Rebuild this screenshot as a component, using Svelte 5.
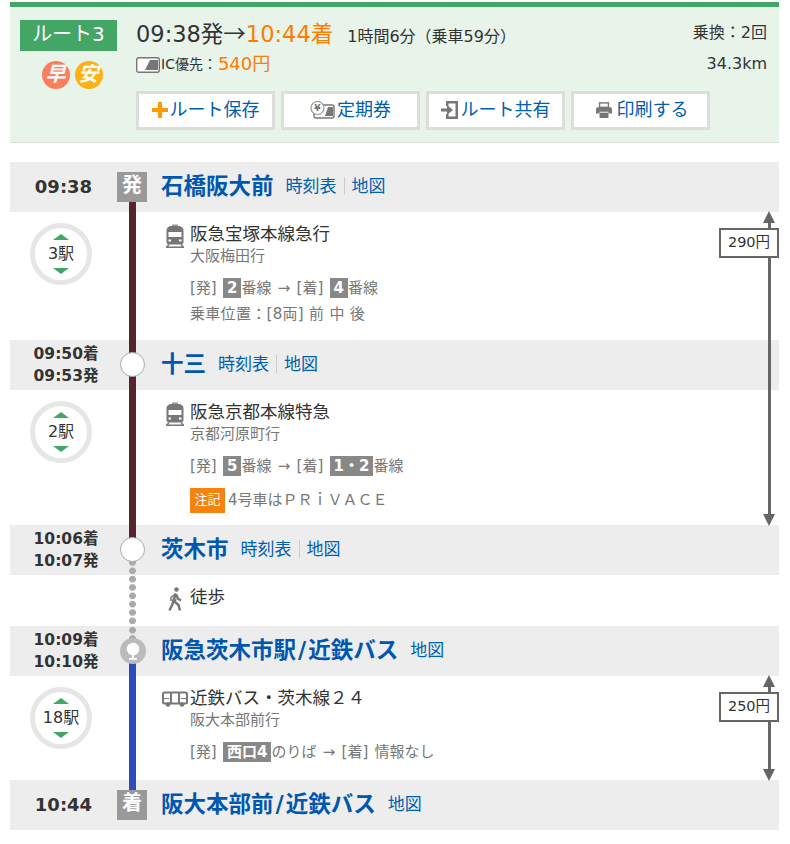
<script>
  const buttons = [
    { icon: "plus", label: "ルート保存" },
    { icon: "pass", label: "定期券" },
    { icon: "share", label: "ルート共有" },
    { icon: "print", label: "印刷する" },
  ];
</script>

{#snippet links(timetable = true)}
  <span class="links">
    {#if timetable}
      <a href="#top" class="timetable">時刻表</a>
    {/if}
    <a href="#top">地図</a>
  </span>
{/snippet}

{#snippet stops(label)}
  <div class="stops">
    <i class="tri up"></i>
    <span>{label}</span>
    <i class="tri down"></i>
  </div>
{/snippet}

{#snippet trainIcon()}
  <svg class="mode" viewBox="0 0 20 24" width="20" height="24">
    <path fill="#777" d="M7 2h6c3.500 0 5.500 2 5.500 4.500V18c0 1.500-1 2.500-2.500 2.500H4c-1.500 0-2.500-1-2.500-2.500V6.500C1.500 4 3.500 2 7 2z" />
    <rect x="7" y="0.500" width="6" height="1.500" fill="#999" />
    <rect x="3.500" y="8" width="13" height="5" fill="#fff" />
    <rect x="3.500" y="15.500" width="2.500" height="2" fill="#fff" />
    <rect x="14" y="15.500" width="2.500" height="2" fill="#fff" />
    <path fill="none" stroke="#777" stroke-width="1.500" d="M4 20.500l-2.500 2.800M16 20.500l2.500 2.800M1 23.200h18" />
  </svg>
{/snippet}

<div class="page" id="top">
  <section class="summary">
    <div class="badge-col">
      <div class="route-no">ルート3</div>
      <div class="marks">
        <span class="mark fast">早</span>
        <span class="mark cheap">安</span>
      </div>
    </div>
    <div class="summary-main">
      <div class="times">
        <span class="clock">09:38発<span class="arrow-glyph">→</span><em>10:44着</em></span>
        <span class="duration">1時間6分（乗車59分）</span>
      </div>
      <div class="price">
        <svg viewBox="0 0 24 16" width="24" height="16">
          <rect x="0.700" y="0.700" width="22.600" height="14.600" rx="2" fill="#fff" stroke="#777" stroke-width="1.400" />
          <path fill="#777" d="M9 13L14 3h8v10z" />
        </svg>
        <span class="ic">IC優先：</span>
        <em>540円</em>
      </div>
      <div class="actions">
        {#each buttons as b}
          <a href="#top" class="action">
            {#if b.icon === "plus"}
              <svg viewBox="0 0 16 16" width="16" height="16"><path fill="#f90" d="M6 0h4v6h6v4h-6v6H6v-6H0V6h6z" /></svg>
            {:else if b.icon === "pass"}
              <svg viewBox="0 0 25 18" width="25" height="18">
                <rect x="4" y="4" width="20" height="13" rx="2" fill="#fff" stroke="#777" stroke-width="1.400" />
                <path fill="#777" d="M15 15l3-9h5v9z" />
                <circle cx="7.500" cy="7" r="6.500" fill="#fff" stroke="#999" stroke-width="1.200" />
                <text x="7.500" y="10" text-anchor="middle" font-size="9" font-weight="700" fill="#777">¥</text>
              </svg>
            {:else if b.icon === "share"}
              <svg viewBox="0 0 18 20" width="18" height="20">
                <path fill="#777" d="M5 1h12v18H5v-5h2.500v2.500h7v-13h-7V6H5z" />
                <path fill="#777" d="M0 8.500h6V5l6 5-6 5v-3.500H0z" />
              </svg>
            {:else}
              <svg class="print" viewBox="0 0 18 18" width="16" height="16">
                <rect x="4" y="1" width="10" height="5" fill="none" stroke="#777" stroke-width="1.600" />
                <path fill="#777" d="M2 6h14c1 0 2 1 2 2v5h-4v-2H4v2H0V8c0-1 1-2 2-2z" />
                <rect x="4" y="12" width="10" height="6" fill="#777" />
              </svg>
            {/if}
            <span>{b.label}</span>
          </a>
        {/each}
      </div>
    </div>
    <div class="summary-side">
      <div>乗換：2回</div>
      <div>34.3km</div>
    </div>
  </section>

  <div class="route">
    <div class="station">
      <div class="time big">09:38</div>
      <div class="rail"><span class="seg lower maroon"></span><span class="terminal">発</span></div>
      <div class="name"><strong>石橋阪大前</strong>{@render links()}</div>
    </div>

    <div class="fare-span">
      <div class="leg leg-a">
        {@render stops("3駅")}
        <div class="rail"><span class="seg full maroon"></span></div>
        <div class="leg-body">
          <div class="line-name">{@render trainIcon()}<span>阪急宝塚本線急行</span></div>
          <div class="dest">大阪梅田行</div>
          <div class="plat">[発] <b>2</b>番線 → [着] <b>4</b>番線</div>
          <div class="plat pos">乗車位置：[8両] 前 中 後</div>
        </div>
      </div>

      <div class="station">
        <div class="time">09:50着<br />09:53発</div>
        <div class="rail"><span class="seg full maroon"></span><span class="node"></span></div>
        <div class="name"><strong>十三</strong>{@render links()}</div>
      </div>

      <div class="leg leg-b">
        {@render stops("2駅")}
        <div class="rail"><span class="seg full maroon"></span></div>
        <div class="leg-body">
          <div class="line-name">{@render trainIcon()}<span>阪急京都本線特急</span></div>
          <div class="dest">京都河原町行</div>
          <div class="plat">[発] <b>5</b>番線 → [着] <b>1・2</b>番線</div>
          <div class="plat note"><span class="tag">注記</span><span class="note-text">4号車はＰＲｉＶＡＣＥ</span></div>
        </div>
      </div>

      <div class="fare">
        <i class="arrow up"></i>
        <i class="shaft short"></i>
        <span class="amount">290円</span>
        <i class="shaft"></i>
        <i class="arrow down"></i>
      </div>
    </div>

    <div class="station">
      <div class="time">10:06着<br />10:07発</div>
      <div class="rail"><span class="seg upper maroon"></span><span class="seg lower dots"></span><span class="node"></span></div>
      <div class="name"><strong>茨木市</strong>{@render links()}</div>
    </div>

    <div class="leg leg-walk">
      <div class="no-stops"></div>
      <div class="rail"><span class="seg full dots"></span></div>
      <div class="leg-body">
        <div class="line-name">
          <svg class="mode walk" viewBox="0 0 14 24" width="14" height="24">
            <circle cx="8.500" cy="2.500" r="2.200" fill="#777" />
            <path fill="none" stroke="#777" stroke-width="2.500" stroke-linejoin="round" d="M8 6.500L5.500 13 4.500 17 1.500 23.500M7.500 12l-1 2.500 4 3.500 1.500 5.500M8.200 7.500l1.600 4 3.200 2" />
            <path fill="none" stroke="#777" stroke-width="1.500" d="M7 7L3 10.500v3.500" />
          </svg>
          <span>徒歩</span>
        </div>
      </div>
    </div>

    <div class="station">
      <div class="time">10:09着<br />10:10発</div>
      <div class="rail">
        <span class="seg upper dots"></span><span class="seg lower blue"></span>
        <span class="node stop">
          <svg viewBox="0 0 26 26" width="26" height="26">
            <circle cx="13" cy="13" r="13" fill="#bbb" />
            <circle cx="13" cy="11" r="6.300" fill="#fff" />
            <path fill="#fff" d="M12 16h2v4h3v1.800H9V20h3z" />
          </svg>
        </span>
      </div>
      <div class="name"><strong>阪急茨木市駅<span class="slash">/</span>近鉄バス</strong>{@render links(false)}</div>
    </div>

    <div class="fare-span">
      <div class="leg leg-c">
        {@render stops("18駅")}
        <div class="rail"><span class="seg full blue"></span></div>
        <div class="leg-body">
          <div class="line-name">
            <svg class="mode bus" viewBox="0 0 26 16" width="26" height="16">
              <rect x="1" y="1.500" width="24" height="11" rx="1.500" fill="#fff" stroke="#777" stroke-width="2" />
              <path fill="#777" d="M8 2h2v10H8zM16 2h2v10h-2zM1 7h6v1H1zM19 7h6v1h-6z" />
              <circle cx="6" cy="13.500" r="2.300" fill="#777" />
              <circle cx="20" cy="13.500" r="2.300" fill="#777" />
            </svg>
            <span>近鉄バス・茨木線２４</span>
          </div>
          <div class="dest">阪大本部前行</div>
          <div class="plat">[発] <b>西口4</b>のりば → [着] 情報なし</div>
        </div>
      </div>
      <div class="fare second">
        <i class="arrow up"></i>
        <i class="shaft short"></i>
        <span class="amount">250円</span>
        <i class="shaft"></i>
        <i class="arrow down"></i>
      </div>
    </div>

    <div class="station">
      <div class="time big">10:44</div>
      <div class="rail"><span class="seg upper blue"></span><span class="terminal">着</span></div>
      <div class="name"><strong>阪大本部前<span class="slash">/</span>近鉄バス</strong>{@render links(false)}</div>
    </div>
  </div>
</div>

<style>
  :global(body) {
    background: #fff;
  }

  .page {
    width: 769px;
    margin-left: 10px;
    padding-top: 2px;
    font-family: "DejaVu Sans", "Noto Sans CJK JP", sans-serif;
    color: #333;
  }

  em {
    font-style: normal;
    color: #ff7c00;
  }

  a {
    color: #0060b0;
    text-decoration: none;
  }

  /* summary */
  .summary {
    display: flex;
    height: 135px;
    border-top: 5px solid #43a566;
    border-bottom: 1px solid #ddd;
    background: #e8f4ea;
  }

  .badge-col {
    width: 97px;
    margin: 13px 0 0 10px;
  }

  .route-no {
    height: 31px;
    background: #43a566;
    color: #fff;
    font-size: 20px;
    line-height: 29px;
    text-align: center;
  }

  .marks {
    display: flex;
    justify-content: center;
    gap: 5px;
    margin-top: 10px;
    padding-left: 7px;
  }

  .mark {
    width: 28px;
    height: 28px;
    border-radius: 50%;
    color: #fff;
    font-size: 20px;
    font-weight: 700;
    font-style: italic;
    line-height: 27px;
    text-align: center;
  }

  .fast {
    background: #f97f5f;
  }

  .cheap {
    background: #fbb117;
  }

  .summary-main {
    width: 555px;
    margin: 10px 0 0 19px;
  }

  .times {
    display: flex;
    align-items: baseline;
    height: 35px;
    margin-top: -2px;
    margin-bottom: 2px;
    line-height: 35px;
  }

  .clock {
    font-size: 22.500px;
  }

  .arrow-glyph {
    font-family: "Noto Sans CJK JP", sans-serif;
  }

  .duration {
    margin-left: 14px;
    font-size: 16px;
  }

  .price {
    display: flex;
    align-items: center;
    gap: 1px;
    height: 27px;
    margin-top: -1px;
    font-size: 14px;
  }

  .ic {
    padding-bottom: 3px;
  }

  .price em {
    font-size: 18px;
    padding-bottom: 6px;
  }

  .actions {
    display: flex;
    gap: 6px;
    margin-top: 13px;
  }

  .action {
    display: flex;
    flex: 0 0 139px;
    align-items: center;
    justify-content: center;
    gap: 2px;
    height: 39px;
    box-sizing: border-box;
    border: 3px solid #ddd;
    background: #fff;
    font-size: 18px;
  }

  .action span {
    padding-bottom: 5px;
  }

  .action svg {
    margin-bottom: 1px;
  }

  .action .print {
    margin: 0 3px 1px 3px;
  }

  .summary-side {
    flex: 1;
    margin: 10px 12px 0 0;
    font-size: 16px;
    line-height: 31px;
    text-align: right;
  }

  /* route table */
  .route {
    margin-top: 19px;
  }

  .station {
    display: grid;
    grid-template-columns: 107px 30px 1fr;
    align-items: center;
    height: 50px;
    background: #ededed;
  }

  .time {
    padding-left: 5px;
    font-size: 15.500px;
    font-weight: 700;
    line-height: 22px;
    text-align: center;
  }

  .time.big {
    padding-left: 0;
    font-size: 18px;
  }

  .rail {
    position: relative;
    align-self: stretch;
  }

  .seg {
    position: absolute;
    left: 12px;
    width: 7px;
  }

  .seg.full {
    top: 0;
    bottom: 0;
  }

  .seg.upper {
    top: 0;
    height: 50%;
  }

  .seg.lower {
    top: 50%;
    bottom: 0;
  }

  .maroon {
    background: #56242f;
  }

  .blue {
    background: #2e4bbb;
  }

  .dots {
    background: radial-gradient(circle, #aaa 3.200px, transparent 3.600px) center top / 7px 8.333px repeat-y;
  }

  .terminal {
    position: absolute;
    top: 10px;
    left: 0;
    width: 30px;
    height: 30px;
    background: #999;
    color: #fff;
    font-size: 20px;
    font-weight: 700;
    line-height: 27px;
    text-align: center;
  }

  .node {
    position: absolute;
    top: 12px;
    left: 3px;
    width: 25px;
    height: 25px;
    box-sizing: border-box;
    border: 1.500px solid #aaa;
    border-radius: 50%;
    background: #fff;
  }

  .node.stop {
    border: 0;
    background: none;
    left: 2.500px;
    width: 26px;
    height: 26px;
  }

  .name {
    display: flex;
    align-items: center;
    padding-left: 14px;
    margin-top: -3px;
  }

  .name strong {
    color: #0057b0;
    font-size: 22.500px;
    line-height: 30px;
  }

  .slash {
    padding: 0 2px;
  }

  .links {
    display: flex;
    align-items: center;
    margin-left: 12px;
    font-size: 17px;
    line-height: 24px;
  }

  .timetable {
    padding-right: 7px;
    margin-right: 7px;
    border-right: 1px solid #ccc;
    line-height: 18px;
  }

  .fare-span {
    position: relative;
  }

  .leg {
    display: grid;
    grid-template-columns: 107px 30px 1fr;
  }

  .leg-a {
    height: 128px;
  }

  .leg-b {
    height: 135px;
  }

  .leg-walk {
    height: 51px;
  }

  .leg-c {
    height: 104px;
  }

  .stops {
    display: flex;
    flex-direction: column;
    align-items: center;
    justify-content: center;
    gap: 5px;
    width: 62px;
    height: 62px;
    box-sizing: border-box;
    margin: 11px 0 0 20px;
    border: 5px solid #e6e6e6;
    border-radius: 50%;
    font-size: 16px;
    line-height: 18px;
  }

  .tri {
    width: 0;
    height: 0;
    border-left: 8px solid transparent;
    border-right: 8px solid transparent;
  }

  .tri.up {
    border-bottom: 6px solid #43a566;
  }

  .tri.down {
    border-top: 6px solid #43a566;
  }

  .leg-body {
    padding: 8px 0 0 43px;
    position: relative;
  }

  .line-name {
    height: 28px;
    font-size: 17.500px;
    line-height: 28px;
  }

  .mode {
    position: absolute;
    left: 18px;
    top: 12px;
  }

  .mode.walk {
    left: 21px;
    top: 12px;
  }

  .mode.bus {
    left: 15px;
    top: 15px;
  }

  .dest {
    height: 20px;
    margin-top: -2px;
    color: #777;
    font-size: 15px;
    line-height: 20px;
  }

  .plat {
    margin-top: 11px;
    height: 22px;
    color: #777;
    font-size: 15px;
    line-height: 22px;
    word-spacing: 1.500px;
  }

  .plat b {
    padding: 1px 4px;
    background: #888;
    color: #fff;
    font-size: 15px;
  }

  .pos {
    margin-top: 4px;
    word-spacing: 0;
    letter-spacing: 0.300px;
  }

  .note {
    display: flex;
    align-items: center;
    height: 25px;
    margin-top: 11px;
  }

  .note-text {
    padding-bottom: 2px;
  }

  .tag {
    width: 35px;
    height: 25px;
    margin-right: 3px;
    background: #f5830f;
    color: #fff;
    font-size: 13px;
    line-height: 24px;
    text-align: center;
  }

  /* fare bracket */
  .fare {
    position: absolute;
    top: -1px;
    right: 0;
    bottom: -1px;
    display: flex;
    flex-direction: column;
    align-items: flex-end;
    width: 60px;
  }

  .arrow {
    width: 0;
    height: 0;
    margin-right: 4px;
    border-left: 6px solid transparent;
    border-right: 6px solid transparent;
  }

  .arrow.up {
    border-bottom: 12px solid #666;
  }

  .arrow.down {
    border-top: 12px solid #666;
  }

  .shaft {
    flex: 1;
    width: 3px;
    margin-right: 8.500px;
    background: #666;
  }

  .shaft.short {
    flex: 0 0 5px;
  }

  .amount {
    width: 60px;
    height: 30px;
    box-sizing: border-box;
    border: 2px solid #666;
    background: #fff;
    font-size: 14.500px;
    line-height: 25px;
    text-align: center;
  }
</style>
